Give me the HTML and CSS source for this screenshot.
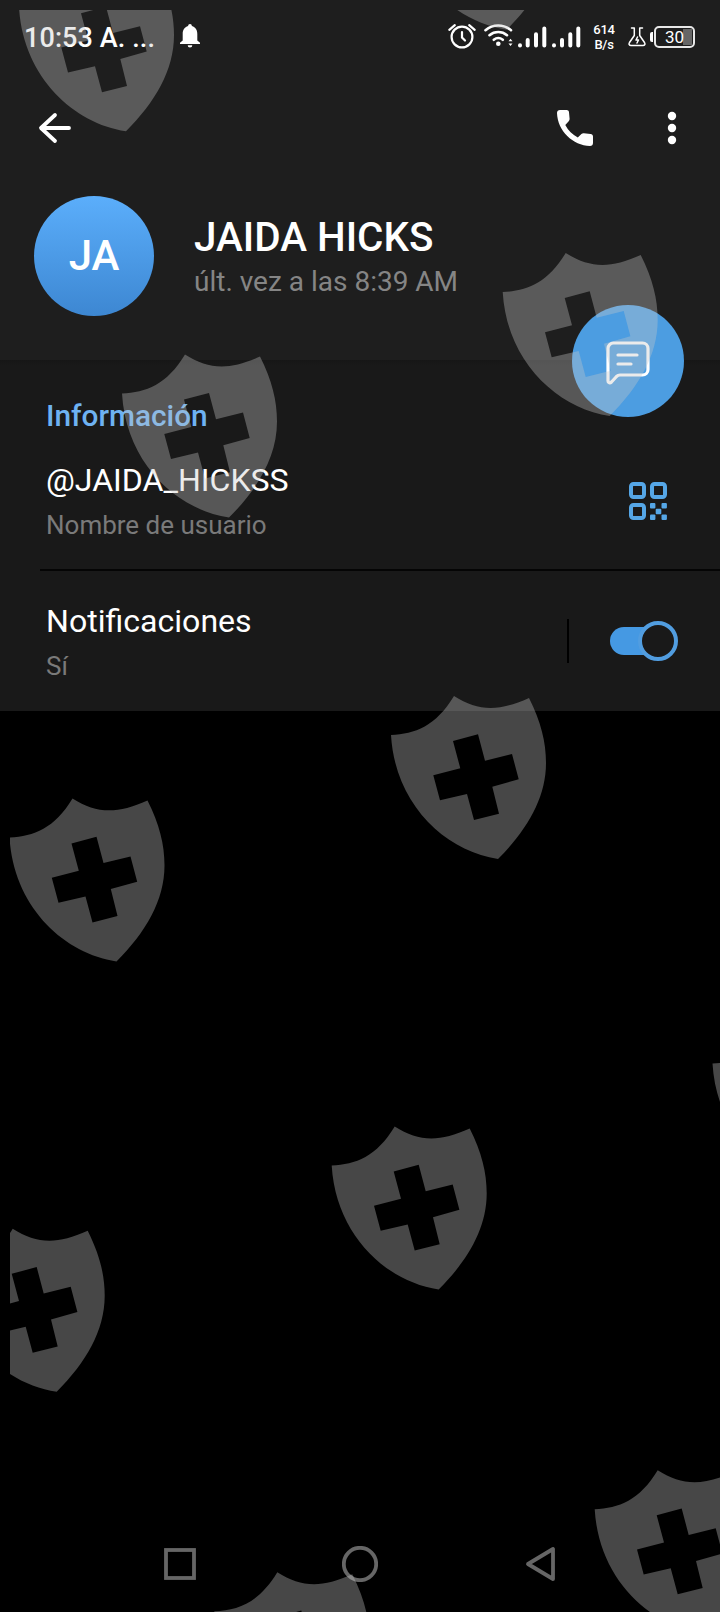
FILE: index.html
```html
<!DOCTYPE html>
<html lang="es">
<head>
<meta charset="utf-8">
<title>JAIDA HICKS</title>
<link rel="stylesheet" href="styles.css">
</head>
<body>
<div class="screen">
  <header class="header">
    <div class="status">
      <span class="clock">10:53 A. ...</span>
      <svg class="bell" width="22" height="26" viewBox="0 0 22 26"><path d="M11 1c1.200 0 1.800.8 1.900 2C16.600 4 18.300 7.200 18.300 11v6.500l2.700 2.300V21H1v-1.200l2.700-2.300V11C3.700 7.200 5.400 4 9.100 3 9.200 1.800 9.800 1 11 1zM8.700 22.200h4.600a2.300 2.300 0 0 1-4.600 0z" fill="#fff"/></svg>
      <svg class="signals" width="138" height="30" viewBox="0 0 138 30" fill="none" stroke="#fff" stroke-linecap="round">
        <g stroke-width="2.200"><circle cx="15" cy="16" r="10.400"/><path d="M15 11v5.500l3 3M2.300 8.800l5.500-4.600M22.200 4.200l5.500 4.600"/></g>
        <g stroke-width="2.600"><path d="M38.500 9.200c7.500-6.300 18-6.300 25.500 0M42.500 14.200c5-4.200 12.500-4.200 17.500 0M46.800 18.800c2.700-2.200 6.200-2.200 9 0"/></g>
        <circle cx="51.300" cy="22.700" r="2.300" fill="#fff" stroke="none"/>
        <path d="M61.500 20.200l2-2.400 2 2.400zM61.500 22.600l2 2.400 2-2.400z" fill="#fff" stroke="none"/>
        <g stroke-width="4"><path d="M73 24.300v.1M80.700 19v5.400M89 13.300v11.100M97.300 7.500v16.900M107 24.300v.1M115 19v5.400M123.300 13.300v11.100M131.300 7.500v16.900"/></g>
      </svg>
      <span class="rate"><span>614</span><span>B/s</span></span>
      <svg class="flask" width="18" height="20" viewBox="0 0 18 20" fill="none" stroke="#fff" stroke-width="1.500" stroke-linejoin="round" stroke-linecap="round"><path d="M3.500 1h2.800v7.500L1.500 15.500c-1 1.800-.2 3 1.500 3h12c1.700 0 2.500-1.200 1.500-3L11.700 8.500V1h2.800"/><path d="M9.500 10L8 13h2.500L9 16"/></svg>
      <span class="battery-tip"></span>
      <span class="battery"><span class="level">30</span></span>
    </div>
    <div class="toolbar">
      <svg class="back" width="34" height="32" viewBox="0 0 34 32" fill="none" stroke="#fff" stroke-width="3.800" stroke-linecap="round" stroke-linejoin="round"><path d="M17 3L3 16l14 13M4 16h27"/></svg>
      <svg class="call" width="38" height="38" viewBox="0 0 38 38"><path d="M4 1h6.500c1.400 0 2.400.8 2.500 2.200l.6 6.600c.1 1-.2 1.800-.9 2.500L9.300 16c3 5.600 7 9.500 12.500 12.600l3.600-3.500c.7-.6 1.500-.9 2.400-.8l6.800.6c1.400.1 2.400 1.100 2.400 2.500V34c0 1.800-1.200 3-3 3C17 36.500 1.500 22 1 4c0-1.800 1.200-3 3-3z" fill="#fff"/></svg>
      <svg class="more" width="10" height="34" viewBox="0 0 10 34" fill="#fff"><circle cx="5" cy="5" r="4.200"/><circle cx="5" cy="17" r="4.200"/><circle cx="5" cy="29" r="4.200"/></svg>
    </div>
    <div class="profile">
      <div class="avatar">JA</div>
      <div class="identity">
        <div class="name">JAIDA HICKS</div>
        <div class="seen">últ. vez a las 8:39 AM</div>
      </div>
    </div>
  </header>
  <main class="info">
    <h2 class="heading">Información</h2>
    <div class="row username">
      <div>
        <div class="title">@JAIDA_HICKSS</div>
        <div class="sub">Nombre de usuario</div>
      </div>
      <svg class="qr" width="38" height="38" viewBox="0 0 38 38"><g fill="none" stroke="#55a6e6" stroke-width="4"><rect x="2" y="2" width="13" height="13" rx="2.500"/><rect x="23" y="2" width="13" height="13" rx="2.500"/><rect x="2" y="23" width="13" height="13" rx="2.500"/></g><g fill="#55a6e6"><rect x="21" y="21" width="5.400" height="5.400" rx="1"/><rect x="32.500" y="21" width="5.400" height="5.400" rx="1"/><rect x="26.700" y="26.700" width="5.600" height="5.600" rx="1"/><rect x="21" y="32.500" width="5.400" height="5.400" rx="1"/><rect x="32.500" y="32.500" width="5.400" height="5.400" rx="1"/></g></svg>
    </div>
    <div class="row notifications">
      <div>
        <div class="title">Notificaciones</div>
        <div class="sub">Sí</div>
      </div>
      <div class="control">
        <span class="bar"></span>
        <svg width="68" height="40" viewBox="0 0 68 40"><rect x="0" y="6" width="56" height="28" rx="14" fill="#4599e3"/><circle cx="48" cy="20" r="18" fill="#191919" stroke="#519de0" stroke-width="4"/></svg>
      </div>
    </div>
  </main>
  <nav class="nav">
    <svg width="32" height="32" viewBox="0 0 32 32"><rect x="2" y="2" width="28" height="28"/></svg>
    <svg width="36" height="36" viewBox="0 0 36 36"><circle cx="18" cy="18" r="16.200"/></svg>
    <svg width="31" height="36" viewBox="0 0 31 36"><path d="M28 3v30L3 18z" stroke-linejoin="round"/></svg>
  </nav>
  <button class="fab" aria-label="Mensaje">
    <svg width="44" height="44" viewBox="0 0 44 44" fill="none" stroke="#fff" stroke-width="3.200" stroke-linejoin="round" stroke-linecap="round"><path d="M7.500 2h29a5.500 5.500 0 0 1 5.500 5.500v21a5.500 5.500 0 0 1-5.500 5.500H14c-1.500 0-2.500.5-3.500 1.500L5.500 41c-1.500 1.500-3.500 1-3.500-1V7.500A5.500 5.500 0 0 1 7.500 2z"/><path d="M12 14h19M12 23h13"/></svg>
  </button>
  <svg class="watermark" width="720" height="1612" viewBox="0 0 720 1612">
    <defs>
      <path id="shield" fill-rule="evenodd" d="M11 55C35 54 56 46 74 16C98 31 118 32 149 18C161 42 166 62 166 83C166 118 147 150 118 179C65 171 15 124 11 55ZM73 61L98 54.300L105 80.700L132 74L138.700 99.300L112.300 106.700L119 133.700L94 140L87 114L60 120.300L53.300 95.300L80.300 88.300Z"/>
      <clipPath id="area"><rect x="10" y="10" width="710" height="1602"/></clipPath>
    </defs>
    <g clip-path="url(#area)" fill="#c8c8c8" fill-opacity=".355">
      <use href="#shield" x="8" y="-47.700"/>
      <use href="#shield" x="388.700" y="-149.300"/>
      <use href="#shield" x="491.700" y="237"/>
      <use href="#shield" x="111" y="338.600"/>
      <use href="#shield" x="380" y="680"/>
      <use href="#shield" x="-1.500" y="782.400"/>
      <use href="#shield" x="701.500" y="1008.500"/>
      <use href="#shield" x="320.700" y="1110.500"/>
      <use href="#shield" x="-61.300" y="1212.800"/>
      <use href="#shield" x="583.700" y="1454.300"/>
      <use href="#shield" x="203.300" y="1556.300"/>
    </g>
  </svg>
</div>
</body>
</html>
```
FILE: styles.css
```css
* { box-sizing: border-box; }
body { margin: 0; background: #000; font-family: Roboto, sans-serif; color: #fff; }
svg { display: block; flex: none; }
.screen { position: relative; width: 720px; height: 1612px; overflow: hidden; display: flex; flex-direction: column; background: #000; white-space: nowrap; }
.header { height: 360px; background: #1e1e1e; flex: none; }
.status { height: 74px; padding: 0 25px 0 24px; display: flex; align-items: center; }
.clock { width: 155px; font-size: 27px; font-weight: 500; letter-spacing: .1px; padding-top: 2px; }
.bell { margin-top: -2px; }
.signals { margin-left: 246px; margin-top: -2px; }
.rate { width: 24px; margin-left: 7px; display: flex; flex-direction: column; align-items: center; font-size: 13px; line-height: 15px; font-weight: 500; letter-spacing: -.3px; }
.flask { margin-left: 12px; }
.battery-tip { width: 3px; height: 10px; margin-left: 4px; border-radius: 2px 0 0 2px; background: #fff; }
.battery { width: 41px; height: 22px; margin-left: 1px; border: 2px solid #e8e8e8; border-radius: 5px; padding: 1px; }
.level { display: block; height: 16px; font-size: 17px; line-height: 17px; text-align: center; background: linear-gradient(90deg, transparent 73%, #666 73%); }
.toolbar { height: 108px; display: flex; align-items: center; padding: 0 43px 0 38px; }
.call { margin-left: auto; }
.more { margin-left: 73px; }
.profile { display: flex; align-items: center; padding: 14px 34px 0; gap: 40px; }
.avatar { width: 120px; height: 120px; border-radius: 50%; background: linear-gradient(#5baefb, #3d87d2); font-size: 42px; font-weight: 500; line-height: 120px; text-align: center; }
.name { font-size: 40.400px; line-height: 48px; font-weight: 500; padding-top: 2px; }
.seen { font-size: 28px; line-height: 36px; margin-top: 2px; color: #858585; }
.info { height: 351px; flex: none; background: linear-gradient(#161616, #191919 5px); padding: 38px 0 0 46px; }
.heading { margin: 0; font-size: 29.800px; line-height: 36px; font-weight: 500; color: #6eb2f2; }
.title { font-size: 32.100px; line-height: 40px; }
.sub { font-size: 26px; line-height: 34px; margin-top: 8px; color: #7a7a7a; }
.row { display: flex; align-items: flex-start; justify-content: space-between; }
.username { height: 137px; padding: 26px 53px 0 6px; margin-left: -6px; border-bottom: 2px solid #050505; }
.qr { margin-top: 22px; }
.notifications { padding: 30px 42px 0 0; }
.control { display: flex; align-items: center; gap: 41px; height: 44px; margin-top: 18px; }
.control .bar { width: 2px; height: 44px; background: #000; }
.nav { margin-top: auto; height: 96px; display: grid; grid-template-columns: repeat(3, 180px); justify-content: center; justify-items: center; align-items: center; fill: none; stroke: #666; stroke-width: 3.800; }
.fab { position: absolute; left: 572px; top: 305px; width: 112px; height: 112px; border: 0; padding: 0; border-radius: 50%; background: #4c9de1; display: grid; place-items: center; }
.fab svg { margin-top: 3px; }
.watermark { position: absolute; left: 0; top: 0; pointer-events: none; }
```
